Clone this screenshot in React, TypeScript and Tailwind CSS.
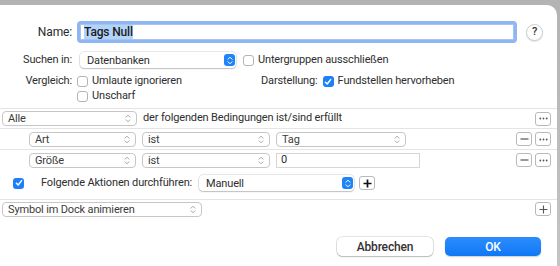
import React from "react"

const font = { fontFamily: "Roboto, 'Liberation Sans', sans-serif" }

function Updown({ color = "#a3a3a3" }: { color?: string }) {
  return (
    <svg width="6" height="9" viewBox="0 0 6 9" fill="none" aria-hidden>
      <path d="M1 3.2 L3 1.2 L5 3.2" stroke={color} strokeWidth="1" strokeLinecap="round" strokeLinejoin="round" />
      <path d="M1 5.8 L3 7.8 L5 5.8" stroke={color} strokeWidth="1" strokeLinecap="round" strokeLinejoin="round" />
    </svg>
  )
}

function Popup({ label, className = "" }: { label: string; className?: string }) {
  return (
    <div
      className={`flex h-[15px] items-center justify-between rounded-[4px] border border-[#c6c6c6] bg-white pl-[5px] pr-[5px] text-[11px] text-[#3b3b3b] ${className}`}
    >
      <span className="whitespace-nowrap leading-none">{label}</span>
      <Updown />
    </div>
  )
}

function BluePopup({ label, className = "" }: { label: string; className?: string }) {
  return (
    <div
      className={`flex h-[16px] items-center justify-between rounded-[4px] bg-white pl-[7px] pr-[1px] text-[11px] text-[#2e2e2e] shadow-[0_0_0_0.5px_rgba(0,0,0,0.18),0_1px_1.5px_rgba(0,0,0,0.18)] ${className}`}
    >
      <span className="whitespace-nowrap leading-none">{label}</span>
      <div className="flex h-[12px] w-[11px] items-center justify-center rounded-[3px] bg-[#1f84f7]">
        <Updown color="#ffffff" />
      </div>
    </div>
  )
}

function Check({ checked = false }: { checked?: boolean }) {
  if (checked)
    return (
      <div className="flex h-[11px] w-[11px] shrink-0 items-center justify-center rounded-[3px] bg-[#1c81f8]">
        <svg width="8" height="8" viewBox="0 0 8 8" fill="none" aria-hidden>
          <path d="M1.4 4.2 L3.2 6 L6.6 1.6" stroke="#fff" strokeWidth="1.5" strokeLinecap="round" strokeLinejoin="round" />
        </svg>
      </div>
    )
  return <div className="h-[11px] w-[11px] shrink-0 rounded-[3px] border border-[#b4b4b4] bg-white" />
}

function SmallBtn({ kind, className = "" }: { kind: "more" | "minus" | "plus" | "plusBold"; className?: string }) {
  return (
    <div
      className={`flex h-[14px] w-[16px] shrink-0 items-center justify-center rounded-[3px] border border-[#b9b9b9] bg-white ${className}`}
    >
      {kind === "more" && (
        <svg width="9" height="3" viewBox="0 0 9 3" aria-hidden>
          <circle cx="1.3" cy="1.5" r="0.9" fill="#555" />
          <circle cx="4.5" cy="1.5" r="0.9" fill="#555" />
          <circle cx="7.7" cy="1.5" r="0.9" fill="#555" />
        </svg>
      )}
      {kind === "minus" && (
        <svg width="9" height="2" viewBox="0 0 9 2" aria-hidden>
          <path d="M0.5 1 H8.5" stroke="#555" strokeWidth="1.2" />
        </svg>
      )}
      {(kind === "plus" || kind === "plusBold") && (
        <svg width="9" height="9" viewBox="0 0 9 9" aria-hidden>
          <path
            d="M4.5 0.5 V8.5 M0.5 4.5 H8.5"
            stroke={kind === "plusBold" ? "#111" : "#555"}
            strokeWidth={kind === "plusBold" ? 1.7 : 1.1}
          />
        </svg>
      )}
    </div>
  )
}

function Sep() {
  return <div className="h-px w-full bg-[#e4e4e4]" />
}

export default function App() {
  return (
    <div
      className="h-[266px] w-[560px] overflow-hidden bg-gradient-to-b from-[#b3b3b3] to-[#c4c4c4] tracking-[-0.15px]"
      style={font}
    >
      <div className="mt-[5px] flex h-[261px] w-[557px] flex-col rounded-tr-[10px] bg-white">
        {/* name */}
        <div className="mt-[16px] flex h-[22px] items-center">
          <div className="w-[72px] text-right text-[12px] text-[#2a2a2a]">Name:</div>
          <div className="ml-[5px] flex h-[22px] w-[440px] items-center rounded-[4px] border-[3px] border-[#8db6f2] bg-white">
            <div className="flex h-full w-full items-center border border-[#a9c4ea] pl-[3px]">
              <span className="bg-[#b4d3fb] text-[12px] font-medium leading-[14px] text-[#1c1c1c]">Tags Null</span>
            </div>
          </div>
          <div className="ml-[9px] flex h-[17px] w-[17px] items-center justify-center rounded-full border border-[#cdcdcd] bg-white text-[11px] font-medium text-[#333] shadow-[0_1px_1px_rgba(0,0,0,0.12)]">
            ?
          </div>
        </div>

        {/* suchen in */}
        <div className="mt-[9px] flex h-[16px] items-center whitespace-nowrap">
          <div className="w-[72px] text-right text-[11px] text-[#2e2e2e]">Suchen in:</div>
          <BluePopup label="Datenbanken" className="ml-[8px] w-[156px]" />
          <div className="ml-[7px]">
            <Check />
          </div>
          <span className="ml-[4px] text-[11px] text-[#2e2e2e]">Untergruppen ausschließen</span>
        </div>

        {/* vergleich */}
        <div className="mt-[6px] flex h-[15px] items-center whitespace-nowrap text-[11px] text-[#2e2e2e]">
          <div className="w-[72px] text-right">Vergleich:</div>
          <div className="flex w-[189px] items-center pl-[5px]">
            <Check />
            <span className="ml-[4px]">Umlaute ignorieren</span>
          </div>
          <span>Darstellung:</span>
          <div className="ml-[5px]">
            <Check checked />
          </div>
          <span className="ml-[4px]">Fundstellen hervorheben</span>
        </div>
        <div className="flex h-[14px] items-center pl-[77px] text-[11px] text-[#2e2e2e]">
          <Check />
          <span className="ml-[4px]">Unscharf</span>
        </div>

        <div className="mt-[5px]">
          <Sep />
        </div>

        {/* alle */}
        <div className="flex h-[19px] items-center">
          <Popup label="Alle" className="ml-[2px] w-[135px]" />
          <span className="ml-[6px] whitespace-nowrap text-[11px] text-[#2e2e2e]">der folgenden Bedingungen ist/sind erfüllt</span>
          <SmallBtn kind="more" className="ml-auto mr-[6px]" />
        </div>
        <Sep />

        {/* art */}
        <div className="flex h-[20px] items-center">
          <Popup label="Art" className="ml-[29px] w-[107px]" />
          <Popup label="ist" className="ml-[6px] w-[128px]" />
          <Popup label="Tag" className="ml-[6px] w-[130px]" />
          <SmallBtn kind="minus" className="ml-auto" />
          <SmallBtn kind="more" className="ml-[3px] mr-[6px]" />
        </div>
        <Sep />

        {/* groesse */}
        <div className="flex h-[20px] items-center">
          <Popup label="Größe" className="ml-[29px] w-[107px]" />
          <Popup label="ist" className="ml-[6px] w-[128px]" />
          <div className="ml-[6px] flex h-[15px] w-[144px] items-center border border-[#d6d6d6] bg-white pl-[4px] text-[11px] text-[#2e2e2e]">
            0
          </div>
          <SmallBtn kind="minus" className="ml-auto" />
          <SmallBtn kind="more" className="ml-[3px] mr-[6px]" />
        </div>

        {/* aktionen */}
        <div className="mt-[5px] flex h-[16px] items-center">
          <div className="ml-[13px]">
            <Check checked />
          </div>
          <div className="ml-[17px] w-[158px] whitespace-nowrap text-[11px] text-[#2e2e2e]">Folgende Aktionen durchführen:</div>
          <BluePopup label="Manuell" className="w-[155px]" />
          <SmallBtn kind="plusBold" className="ml-[5px]" />
        </div>

        <div className="mt-[8px]">
          <Sep />
        </div>

        {/* symbol */}
        <div className="flex h-[18px] items-center">
          <Popup label="Symbol im Dock animieren" className="ml-[2px] w-[200px]" />
          <SmallBtn kind="plus" className="ml-auto mr-[6px]" />
        </div>

        {/* buttons */}
        <div className="mt-[19px] flex justify-end gap-[12px] pr-[16px]">
          <div className="flex h-[19px] w-[96px] items-center justify-center rounded-[5px] bg-white text-[12px] font-medium text-[#333] shadow-[0_0_0_0.5px_rgba(0,0,0,0.2),0_1px_1.5px_rgba(0,0,0,0.2)]">
            Abbrechen
          </div>
          <div className="flex h-[19px] w-[96px] items-center justify-center rounded-[5px] bg-gradient-to-b from-[#2b8dfc] to-[#0f77f6] text-[12px] font-medium text-white shadow-[0_1px_1.5px_rgba(0,0,0,0.2)]">
            OK
          </div>
        </div>
      </div>
    </div>
  )
}
